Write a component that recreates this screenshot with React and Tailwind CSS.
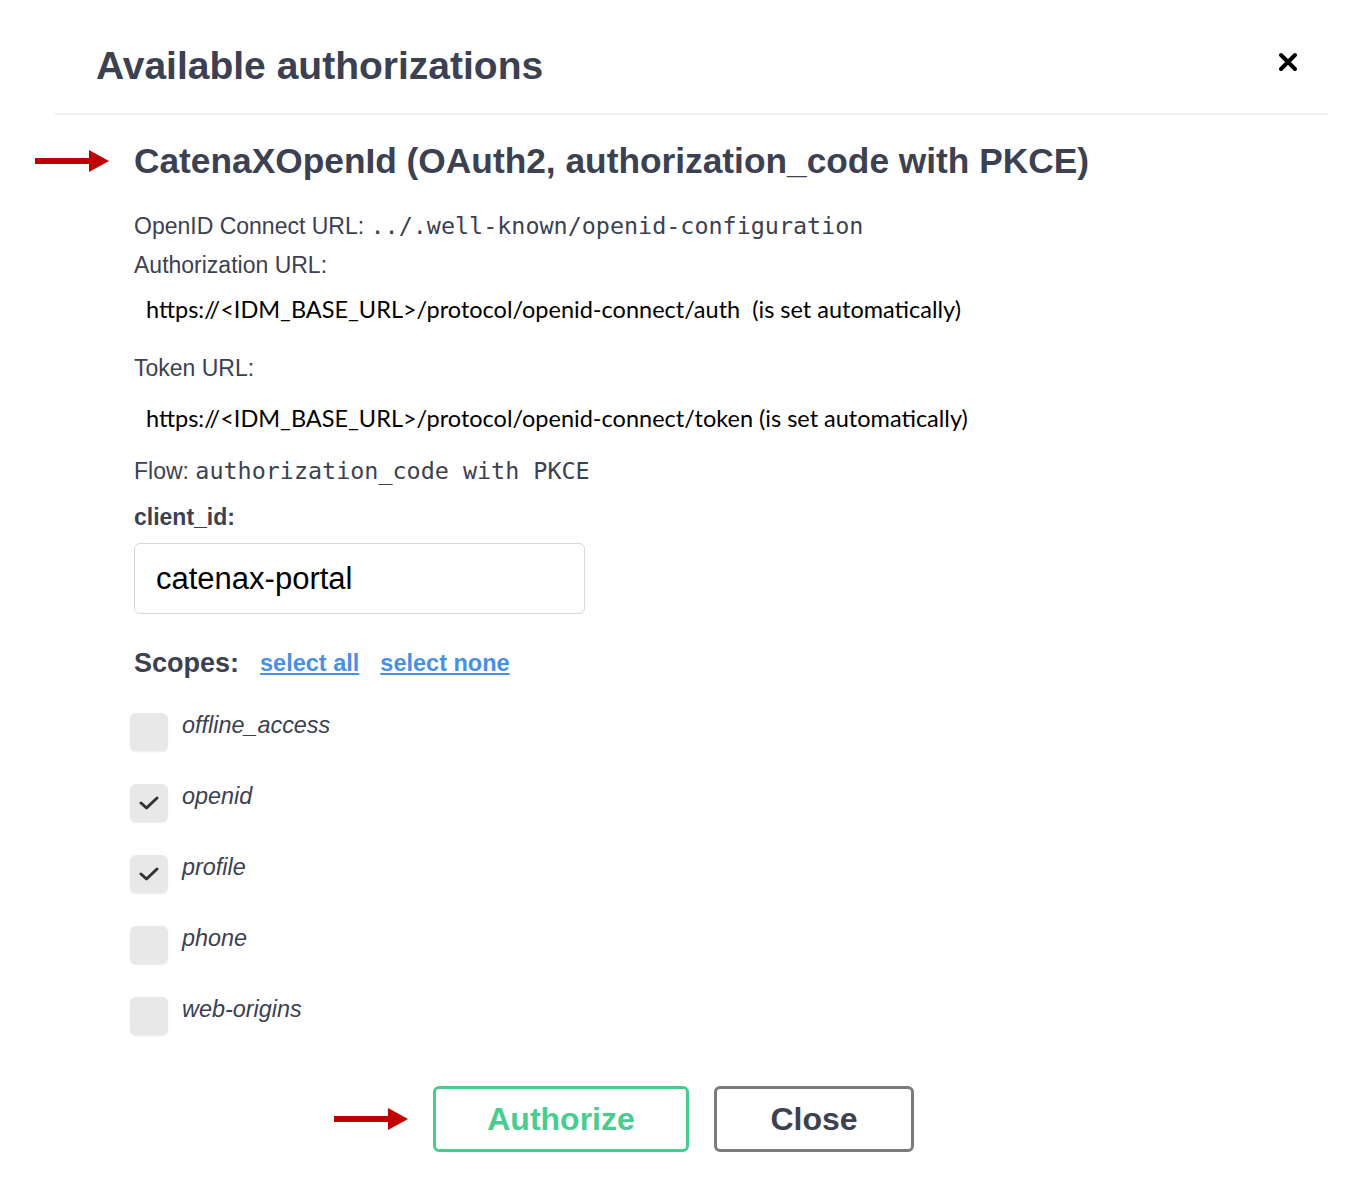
import React, { useState } from "react";

const sans = { fontFamily: '"Liberation Sans", Arial, sans-serif' };

function RedArrow() {
  return (
    <svg width="74" height="24" viewBox="0 0 74 24">
      <rect x="0" y="9" width="56" height="6" fill="#c00000" />
      <polygon points="54,1 74,12 54,23" fill="#c00000" />
    </svg>
  );
}

function Check() {
  return (
    <svg width="20" height="14" viewBox="0 0 20 14">
      <path d="M2 7 L7.5 12 L18 2" fill="none" stroke="#333" strokeWidth="3" strokeLinecap="round" strokeLinejoin="round" />
    </svg>
  );
}

const initialScopes = [
  { name: "offline_access", on: false },
  { name: "openid", on: true },
  { name: "profile", on: true },
  { name: "phone", on: false },
  { name: "web-origins", on: false },
];

export default function App() {
  const [scopes, setScopes] = useState(initialScopes);

  const toggle = (name) =>
    setScopes(scopes.map((s) => (s.name === name ? { ...s, on: !s.on } : s)));

  return (
    <div className="w-[1366px] h-[1202px] bg-white text-[#3b4151]" style={sans}>
      {/* header */}
      <div className="ml-[55px] mr-[38px] flex items-center justify-between border-b-2 border-[#eeeeee] pt-[44px] pb-[25px] pl-[41px] pr-[30px]">
        <h3 className="text-[39px] leading-[44px] font-bold">Available authorizations</h3>
        <button className="mb-[8px]">
          <svg width="20" height="20" viewBox="0 0 20 20">
            <path d="M3 3 L17 17 M17 3 L3 17" stroke="#000" strokeWidth="4" strokeLinecap="round" />
          </svg>
        </button>
      </div>

      {/* scheme title */}
      <div className="mt-[26px] pl-[35px] flex items-center gap-[25px]">
        <RedArrow />
        <h4 className="text-[35.3px] leading-[40px] font-bold">
          CatenaXOpenId (OAuth2, authorization_code with PKCE)
        </h4>
      </div>

      <div className="pl-[134px] text-[23px] leading-[36px]">
        <div className="mt-[27px]">
          OpenID Connect URL:{" "}
          <code className="font-['DejaVu_Sans_Mono',monospace] text-[23.4px]">../.well-known/openid-configuration</code>
        </div>
        <div className="mt-[3px]">Authorization URL:</div>
        <div className="mt-[8px] pl-[12px] text-black font-['Lato',sans-serif] text-[23.5px]">
          https://&lt;IDM_BASE_URL&gt;/protocol/openid-connect/auth&nbsp; (is set automatically)
        </div>
        <div className="mt-[23px]">Token URL:</div>
        <div className="mt-[14px] pl-[12px] text-black font-['Lato',sans-serif] text-[23.5px]">
          https://&lt;IDM_BASE_URL&gt;/protocol/openid-connect/token (is set automatically)
        </div>
        <div className="mt-[17px]">
          Flow:{" "}
          <code className="font-['DejaVu_Sans_Mono',monospace] text-[23.4px]">authorization_code with PKCE</code>
        </div>
        <div className="mt-[10px] font-bold">client_id:</div>
        <input
          className="mt-[8px] block w-[451px] h-[71px] rounded-[6px] border border-[#d9d9d9] px-[21px] text-[31px] text-black outline-none"
          defaultValue="catenax-portal"
        />
        <div className="mt-[31px] flex items-center">
          <span className="text-[27px] font-bold">Scopes:</span>
          <a href="#" className="ml-[21px] text-[23.5px] font-bold text-[#4990e2] underline">select all</a>
          <a href="#" className="ml-[21px] text-[23.5px] font-bold text-[#4990e2] underline">select none</a>
        </div>
      </div>

      <div className="mt-[32px] pl-[130px] flex flex-col gap-[33px]">
        {scopes.map((s) => (
          <label key={s.name} className="flex items-start gap-[14px] cursor-pointer" onClick={() => toggle(s.name)}>
            <span className="w-[38px] h-[38px] rounded-[6px] bg-[#e8e8e8] shadow-[0_1px_2px_rgba(0,0,0,0.08)] flex items-center justify-center">
              {s.on && <Check />}
            </span>
            <span className="italic text-[23.4px] leading-[24px]">{s.name}</span>
          </label>
        ))}
      </div>

      {/* buttons */}
      <div className="mt-[51px] pl-[334px] flex items-center gap-[25px]">
        <RedArrow />
        <button className="w-[256px] h-[66px] rounded-[6px] border-[3px] border-[#49cc90] text-[#49cc90] text-[32px] font-bold">
          Authorize
        </button>
        <button className="w-[200px] h-[66px] rounded-[6px] border-[3px] border-[#7b7b7b] text-[#3b4151] text-[32px] font-bold">
          Close
        </button>
      </div>
    </div>
  );
}
